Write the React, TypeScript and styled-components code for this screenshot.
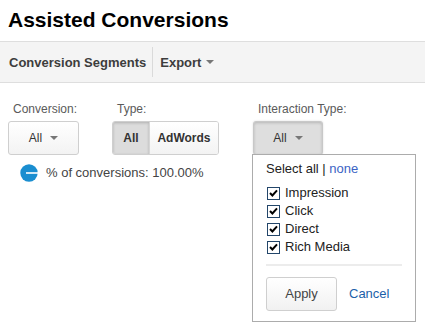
import React from "react";
import styled, { createGlobalStyle } from "styled-components";

const Global = createGlobalStyle`
  html, body { margin: 0; padding: 0; background: #fff; }
  body { font-family: "Liberation Sans", Arial, sans-serif; }
  * { box-sizing: border-box; }
`;

const Page = styled.div`
  width: 425px;
  height: 332px;
  overflow: hidden;
  position: relative;
`;

const Title = styled.h1`
  margin: 0;
  height: 41px;
  padding: 8px 0 0 8px;
  font-size: 21px;
  line-height: 24px;
  font-weight: bold;
  color: #000;
`;

const Toolbar = styled.div`
  height: 42px;
  display: flex;
  align-items: center;
  background: #f4f4f4;
  border-top: 1px solid #dedede;
  border-bottom: 1px solid #dedede;
`;

const ToolItem = styled.div<{ $first?: boolean }>`
  display: flex;
  align-items: center;
  gap: 5px;
  padding: 0 6px 0 ${(p) => (p.$first ? 9 : 7)}px;
  font-size: 13px;
  line-height: 15px;
  font-weight: bold;
  color: #3d3d3d;
`;

const ToolSep = styled.div`
  width: 1px;
  height: 30px;
  background: #dadada;
`;

const Caret = styled.span<{ $color?: string }>`
  display: inline-block;
  width: 0;
  height: 0;
  border-left: 4px solid transparent;
  border-right: 4px solid transparent;
  border-top: 4px solid ${(p) => p.$color || "#777"};
`;

const Controls = styled.div`
  display: grid;
  grid-template-columns: 104px 141px auto;
  padding: 19px 0 0 8px;
`;

const Group = styled.div`
  display: flex;
  flex-direction: column;
  align-items: flex-start;
  position: relative;
`;

const Label = styled.div`
  padding-left: 5px;
  font-size: 12px;
  line-height: 14px;
  color: #5a5a5a;
  margin-bottom: 5px;
`;

const DropButton = styled.div<{ $pressed?: boolean; $w: number }>`
  width: ${(p) => p.$w}px;
  height: 34px;
  display: flex;
  align-items: center;
  justify-content: center;
  gap: 8px;
  font-size: 12px;
  color: #333;
  border-radius: 3px;
  border: 1px solid ${(p) => (p.$pressed ? "#c8c8c8" : "#cfcfcf")};
  background: ${(p) =>
    p.$pressed ? "#dedede" : "linear-gradient(#ffffff, #f3f3f3)"};
  box-shadow: ${(p) =>
    p.$pressed ? "inset 0 1px 3px rgba(0,0,0,0.18), 0 0 2px rgba(0,0,0,0.15)" : "none"};
`;

const Segmented = styled.div`
  display: flex;
  height: 34px;
  border: 1px solid #cfcfcf;
  border-radius: 3px;
  overflow: hidden;
`;

const Segment = styled.div<{ $active?: boolean; $w: number }>`
  width: ${(p) => p.$w}px;
  display: flex;
  align-items: center;
  justify-content: center;
  font-size: 12px;
  font-weight: bold;
  color: #333;
  background: ${(p) => (p.$active ? "#dcdcdc" : "linear-gradient(#ffffff, #f3f3f3)")};
  box-shadow: ${(p) => (p.$active ? "inset 0 1px 3px rgba(0,0,0,0.2)" : "none")};
  & + & {
    border-left: 1px solid #d6d6d6;
  }
`;

const PercentRow = styled.div`
  display: flex;
  align-items: center;
  gap: 8px;
  padding-left: 20px;
  margin-top: 9px;
  font-size: 13px;
  line-height: 18px;
  color: #444;
`;

const Panel = styled.div`
  position: absolute;
  left: -1px;
  top: 52px;
  width: 164px;
  background: #fff;
  border: 1px solid #acacac;
  padding: 5px 13px 10px 13px;
  font-size: 13px;
  line-height: 18px;
  color: #222;
`;

const SelectLine = styled.div`
  margin-bottom: 6px;
`;

const Link = styled.span<{ $color?: string }>`
  color: ${(p) => p.$color || "#3b63c4"};
`;

const CheckRow = styled.div`
  display: flex;
  align-items: center;
  gap: 5px;
  height: 18px;
  padding-left: 1px;
`;

const Box = styled.span`
  width: 13px;
  height: 13px;
  border: 1px solid #23466a;
  background: #fff;
  display: flex;
  align-items: center;
  justify-content: center;
`;

const Divider = styled.div`
  height: 2px;
  background: #ececec;
  margin-top: 8px;
`;

const Actions = styled.div`
  display: flex;
  align-items: center;
  gap: 12px;
  margin-top: 11px;
`;

const ApplyButton = styled.div`
  width: 71px;
  height: 34px;
  display: flex;
  align-items: center;
  justify-content: center;
  border: 1px solid #cfcfcf;
  border-radius: 3px;
  background: linear-gradient(#ffffff, #f1f1f1);
  color: #444;
`;

const Check = () => (
  <svg width="9" height="8" viewBox="0 0 9 8">
    <path d="M1 4 L3.4 6.5 L8 1.3" fill="none" stroke="#000" strokeWidth="2" />
  </svg>
);

const Pie = () => (
  <svg width="18" height="18" viewBox="0 0 18 18">
    <circle cx="9" cy="9" r="8.7" fill="#1a8ed0" />
    <line x1="6" y1="9" x2="18" y2="9" stroke="#fff" strokeWidth="1.6" />
  </svg>
);

const items = ["Impression", "Click", "Direct", "Rich Media"];

export default function App() {
  return (
    <Page>
      <Global />
      <Title>Assisted Conversions</Title>
      <Toolbar>
        <ToolItem $first>Conversion Segments</ToolItem>
        <ToolSep />
        <ToolItem>
          Export <Caret />
        </ToolItem>
      </Toolbar>
      <Controls>
        <Group>
          <Label>Conversion:</Label>
          <DropButton $w={71}>
            All <Caret />
          </DropButton>
        </Group>
        <Group>
          <Label>Type:</Label>
          <Segmented>
            <Segment $active $w={36}>All</Segment>
            <Segment $w={69}>AdWords</Segment>
          </Segmented>
        </Group>
        <Group>
          <Label>Interaction Type:</Label>
          <DropButton $pressed $w={70}>
            All <Caret />
          </DropButton>
          <Panel>
            <SelectLine>
              Select all | <Link>none</Link>
            </SelectLine>
            {items.map((it) => (
              <CheckRow key={it}>
                <Box>
                  <Check />
                </Box>
                {it}
              </CheckRow>
            ))}
            <Divider />
            <Actions>
              <ApplyButton>Apply</ApplyButton>
              <Link $color="#1c5fa9">Cancel</Link>
            </Actions>
          </Panel>
        </Group>
      </Controls>
      <PercentRow>
        <Pie />
        % of conversions: 100.00%
      </PercentRow>
    </Page>
  );
}
